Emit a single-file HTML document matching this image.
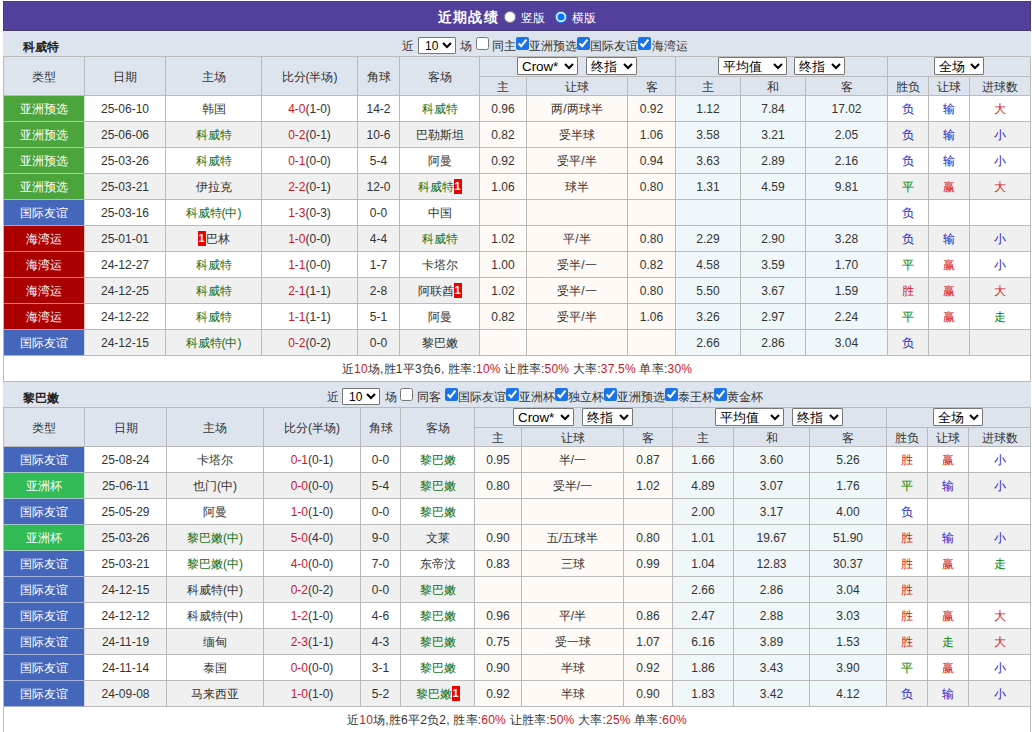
<!DOCTYPE html><html><head><meta charset="utf-8"><style>
*{margin:0;padding:0}
html,body{width:1032px;height:732px;overflow:hidden;background:#fff}
body{position:relative;font-family:"Liberation Sans",sans-serif;font-size:12px;color:#333}
.a{position:absolute}
.t{position:absolute;text-align:center;white-space:nowrap}
.rc{display:inline-block;background:#e00;color:#fff;font-weight:bold;width:8px;height:15px;line-height:15px;font-size:11px;text-align:center;vertical-align:middle;position:relative;top:-1px}
.sel{position:absolute;height:18px;font-family:"Liberation Sans",sans-serif;font-size:13.33px;color:#000;background:#fff;border:1px solid #767676;border-radius:1px;padding:0}
.s10{position:absolute;height:17px;width:38px;font-family:"Liberation Sans",sans-serif;font-size:12px;border:1px solid #767676;border-radius:1px;background:#fff;color:#000;padding:0 0 0 2px}
.cb{position:absolute;width:13px;height:13px;margin:0;accent-color:#1a73e8}
.rd{position:absolute;width:12px;height:12px;margin:0}
</style></head><body><div class="a" style="left:3px;top:1px;width:1028px;height:30px;background:#52409c;box-sizing:border-box;border:1px solid #423b74"></div>
<div class="a" style="left:3px;top:31px;width:1028px;height:1px;background:#e4e4fa;"></div>
<div class="t" style="left:438px;top:2px;height:30px;line-height:30px;text-align:left;color:#fff"><b style="font-size:14px;letter-spacing:1.2px">近期战绩</b></div>
<input type="radio" name="v" class="rd" style="left:504px;top:11px">
<div class="t" style="left:521px;top:3px;height:30px;line-height:30px;text-align:left;color:#fff">竖版</div>
<input type="radio" name="v" class="rd" style="left:555px;top:11px" checked>
<div class="t" style="left:572px;top:3px;height:30px;line-height:30px;text-align:left;color:#fff">横版</div>
<div class="a" style="left:3px;top:32px;width:1028px;height:24px;background:#dde4ee;"></div>
<div class="t" style="left:23px;top:32px;height:24px;line-height:24px;text-align:left;color:#222;padding-top:9px;line-height:12px;height:auto"><b>科威特</b></div>
<div class="t" style="left:402px;top:32px;height:24px;line-height:24px;text-align:left;padding-top:8px;line-height:12px;height:auto">近</div>
<select class="s10" style="left:418px;top:37px"><option>10</option></select>
<div class="t" style="left:460px;top:32px;height:24px;line-height:24px;text-align:left;padding-top:8px;line-height:12px;height:auto">场</div>
<input type="checkbox" class="cb" style="left:476px;top:37px">
<div class="t" style="left:492px;top:32px;height:24px;line-height:24px;text-align:left;padding-top:8px;line-height:12px;height:auto">同主</div>
<input type="checkbox" class="cb" style="left:516px;top:37px" checked>
<div class="t" style="left:529px;top:32px;height:24px;line-height:24px;text-align:left;padding-top:8px;line-height:12px;height:auto">亚洲预选</div>
<input type="checkbox" class="cb" style="left:577px;top:37px" checked>
<div class="t" style="left:590px;top:32px;height:24px;line-height:24px;text-align:left;padding-top:8px;line-height:12px;height:auto">国际友谊</div>
<input type="checkbox" class="cb" style="left:638px;top:37px" checked>
<div class="t" style="left:652px;top:32px;height:24px;line-height:24px;text-align:left;padding-top:8px;line-height:12px;height:auto">海湾运</div>
<div class="a" style="left:3px;top:56px;width:1028px;height:39px;background:#dde4ee;"></div>
<div class="a" style="left:3px;top:56px;width:1028px;height:1px;background:#bababa;"></div>
<div class="a" style="left:479px;top:76px;width:552px;height:1px;background:#bababa;"></div>
<div class="a" style="left:3px;top:95px;width:1028px;height:1px;background:#bababa;"></div>
<div class="a" style="left:3px;top:56px;width:1px;height:40px;background:#bababa;"></div>
<div class="a" style="left:84px;top:56px;width:1px;height:40px;background:#bababa;"></div>
<div class="a" style="left:165px;top:56px;width:1px;height:40px;background:#bababa;"></div>
<div class="a" style="left:261px;top:56px;width:1px;height:40px;background:#bababa;"></div>
<div class="a" style="left:357px;top:56px;width:1px;height:40px;background:#bababa;"></div>
<div class="a" style="left:399px;top:56px;width:1px;height:40px;background:#bababa;"></div>
<div class="a" style="left:479px;top:56px;width:1px;height:40px;background:#bababa;"></div>
<div class="a" style="left:526px;top:76px;width:1px;height:20px;background:#bababa;"></div>
<div class="a" style="left:627px;top:76px;width:1px;height:20px;background:#bababa;"></div>
<div class="a" style="left:675px;top:56px;width:1px;height:40px;background:#bababa;"></div>
<div class="a" style="left:740px;top:76px;width:1px;height:20px;background:#bababa;"></div>
<div class="a" style="left:805px;top:76px;width:1px;height:20px;background:#bababa;"></div>
<div class="a" style="left:887px;top:56px;width:1px;height:40px;background:#bababa;"></div>
<div class="a" style="left:928px;top:76px;width:1px;height:20px;background:#bababa;"></div>
<div class="a" style="left:969px;top:76px;width:1px;height:20px;background:#bababa;"></div>
<div class="a" style="left:1030px;top:56px;width:1px;height:40px;background:#bababa;"></div>
<div class="t" style="left:4px;top:58px;width:80px;height:38px;line-height:38px;color:#333">类型</div>
<div class="t" style="left:85px;top:58px;width:80px;height:38px;line-height:38px;color:#333">日期</div>
<div class="t" style="left:166px;top:58px;width:95px;height:38px;line-height:38px;color:#333">主场</div>
<div class="t" style="left:262px;top:58px;width:95px;height:38px;line-height:38px;color:#333">比分(半场)</div>
<div class="t" style="left:358px;top:58px;width:41px;height:38px;line-height:38px;color:#333">角球</div>
<div class="t" style="left:400px;top:58px;width:79px;height:38px;line-height:38px;color:#333">客场</div>
<div class="t" style="left:480px;top:78px;width:46px;height:18px;line-height:18px;color:#333">主</div>
<div class="t" style="left:527px;top:78px;width:100px;height:18px;line-height:18px;color:#333">让球</div>
<div class="t" style="left:628px;top:78px;width:47px;height:18px;line-height:18px;color:#333">客</div>
<div class="t" style="left:676px;top:78px;width:64px;height:18px;line-height:18px;color:#333">主</div>
<div class="t" style="left:741px;top:78px;width:64px;height:18px;line-height:18px;color:#333">和</div>
<div class="t" style="left:806px;top:78px;width:81px;height:18px;line-height:18px;color:#333">客</div>
<div class="t" style="left:888px;top:78px;width:40px;height:18px;line-height:18px;color:#333">胜负</div>
<div class="t" style="left:929px;top:78px;width:40px;height:18px;line-height:18px;color:#333">让球</div>
<div class="t" style="left:970px;top:78px;width:60px;height:18px;line-height:18px;color:#333">进球数</div>
<select class="sel" style="left:517px;top:57px;width:61px"><option>Crow*</option></select>
<select class="sel" style="left:586px;top:57px;width:51px"><option>终指</option></select>
<select class="sel" style="left:718px;top:57px;width:69px"><option>平均值</option></select>
<select class="sel" style="left:794px;top:57px;width:51px"><option>终指</option></select>
<select class="sel" style="left:934px;top:57px;width:50px"><option>全场</option></select>
<div class="a" style="left:3px;top:96px;width:1028px;height:25px;background:#fff;"></div>
<div class="a" style="left:480px;top:96px;width:195px;height:25px;background:#fffaf6;"></div>
<div class="a" style="left:676px;top:96px;width:211px;height:25px;background:#f0f7fb;"></div>
<div class="a" style="left:4px;top:96px;width:80px;height:25px;background:#4ca53c;"></div>
<div class="a" style="left:3px;top:121px;width:1028px;height:1px;background:#bababa;"></div>
<div class="a" style="left:3px;top:96px;width:1px;height:26px;background:#bababa;"></div>
<div class="a" style="left:84px;top:96px;width:1px;height:26px;background:#bababa;"></div>
<div class="a" style="left:165px;top:96px;width:1px;height:26px;background:#bababa;"></div>
<div class="a" style="left:261px;top:96px;width:1px;height:26px;background:#bababa;"></div>
<div class="a" style="left:357px;top:96px;width:1px;height:26px;background:#bababa;"></div>
<div class="a" style="left:399px;top:96px;width:1px;height:26px;background:#bababa;"></div>
<div class="a" style="left:479px;top:96px;width:1px;height:26px;background:#bababa;"></div>
<div class="a" style="left:526px;top:96px;width:1px;height:26px;background:#bababa;"></div>
<div class="a" style="left:627px;top:96px;width:1px;height:26px;background:#bababa;"></div>
<div class="a" style="left:675px;top:96px;width:1px;height:26px;background:#bababa;"></div>
<div class="a" style="left:740px;top:96px;width:1px;height:26px;background:#bababa;"></div>
<div class="a" style="left:805px;top:96px;width:1px;height:26px;background:#bababa;"></div>
<div class="a" style="left:887px;top:96px;width:1px;height:26px;background:#bababa;"></div>
<div class="a" style="left:928px;top:96px;width:1px;height:26px;background:#bababa;"></div>
<div class="a" style="left:969px;top:96px;width:1px;height:26px;background:#bababa;"></div>
<div class="a" style="left:1030px;top:96px;width:1px;height:26px;background:#bababa;"></div>
<div class="a" style="left:4px;top:96px;width:81px;height:25px;background:#4ca53c;"></div>
<div class="a" style="left:4px;top:121px;width:80px;height:1px;background:#a6d29e;"></div>
<div class="a" style="left:84px;top:96px;width:1px;height:25px;background:#d2e8ce;"></div>
<div class="t" style="left:4px;top:97px;width:80px;height:25px;line-height:25px;color:#fff">亚洲预选</div>
<div class="t" style="left:85px;top:97px;width:80px;height:25px;line-height:25px;">25-06-10</div>
<div class="t" style="left:166px;top:97px;width:95px;height:25px;line-height:25px;"><span style="color:#333">韩国</span></div>
<div class="t" style="left:262px;top:97px;width:95px;height:25px;line-height:25px;"><span style="color:#c8182a">4-0</span>(1-0)</div>
<div class="t" style="left:358px;top:97px;width:41px;height:25px;line-height:25px;">14-2</div>
<div class="t" style="left:400px;top:97px;width:79px;height:25px;line-height:25px;"><span style="color:#167016">科威特</span></div>
<div class="t" style="left:480px;top:97px;width:46px;height:25px;line-height:25px;">0.96</div>
<div class="t" style="left:527px;top:97px;width:100px;height:25px;line-height:25px;">两/两球半</div>
<div class="t" style="left:628px;top:97px;width:47px;height:25px;line-height:25px;">0.92</div>
<div class="t" style="left:676px;top:97px;width:64px;height:25px;line-height:25px;">1.12</div>
<div class="t" style="left:741px;top:97px;width:64px;height:25px;line-height:25px;">7.84</div>
<div class="t" style="left:806px;top:97px;width:81px;height:25px;line-height:25px;">17.02</div>
<div class="t" style="left:888px;top:97px;width:40px;height:25px;line-height:25px;color:#1e1ec4">负</div>
<div class="t" style="left:929px;top:97px;width:40px;height:25px;line-height:25px;color:#1e1ec4">输</div>
<div class="t" style="left:970px;top:97px;width:60px;height:25px;line-height:25px;color:#d41818">大</div>
<div class="a" style="left:3px;top:122px;width:1028px;height:25px;background:#f0f0f0;"></div>
<div class="a" style="left:480px;top:122px;width:195px;height:25px;background:#fffaf6;"></div>
<div class="a" style="left:676px;top:122px;width:211px;height:25px;background:#f0f7fb;"></div>
<div class="a" style="left:4px;top:122px;width:80px;height:25px;background:#4ca53c;"></div>
<div class="a" style="left:3px;top:147px;width:1028px;height:1px;background:#bababa;"></div>
<div class="a" style="left:3px;top:122px;width:1px;height:26px;background:#bababa;"></div>
<div class="a" style="left:84px;top:122px;width:1px;height:26px;background:#bababa;"></div>
<div class="a" style="left:165px;top:122px;width:1px;height:26px;background:#bababa;"></div>
<div class="a" style="left:261px;top:122px;width:1px;height:26px;background:#bababa;"></div>
<div class="a" style="left:357px;top:122px;width:1px;height:26px;background:#bababa;"></div>
<div class="a" style="left:399px;top:122px;width:1px;height:26px;background:#bababa;"></div>
<div class="a" style="left:479px;top:122px;width:1px;height:26px;background:#bababa;"></div>
<div class="a" style="left:526px;top:122px;width:1px;height:26px;background:#bababa;"></div>
<div class="a" style="left:627px;top:122px;width:1px;height:26px;background:#bababa;"></div>
<div class="a" style="left:675px;top:122px;width:1px;height:26px;background:#bababa;"></div>
<div class="a" style="left:740px;top:122px;width:1px;height:26px;background:#bababa;"></div>
<div class="a" style="left:805px;top:122px;width:1px;height:26px;background:#bababa;"></div>
<div class="a" style="left:887px;top:122px;width:1px;height:26px;background:#bababa;"></div>
<div class="a" style="left:928px;top:122px;width:1px;height:26px;background:#bababa;"></div>
<div class="a" style="left:969px;top:122px;width:1px;height:26px;background:#bababa;"></div>
<div class="a" style="left:1030px;top:122px;width:1px;height:26px;background:#bababa;"></div>
<div class="a" style="left:4px;top:122px;width:81px;height:25px;background:#4ca53c;"></div>
<div class="a" style="left:4px;top:147px;width:80px;height:1px;background:#a6d29e;"></div>
<div class="a" style="left:84px;top:122px;width:1px;height:25px;background:#cee5ca;"></div>
<div class="t" style="left:4px;top:123px;width:80px;height:25px;line-height:25px;color:#fff">亚洲预选</div>
<div class="t" style="left:85px;top:123px;width:80px;height:25px;line-height:25px;">25-06-06</div>
<div class="t" style="left:166px;top:123px;width:95px;height:25px;line-height:25px;"><span style="color:#167016">科威特</span></div>
<div class="t" style="left:262px;top:123px;width:95px;height:25px;line-height:25px;"><span style="color:#c8182a">0-2</span>(0-1)</div>
<div class="t" style="left:358px;top:123px;width:41px;height:25px;line-height:25px;">10-6</div>
<div class="t" style="left:400px;top:123px;width:79px;height:25px;line-height:25px;"><span style="color:#333">巴勒斯坦</span></div>
<div class="t" style="left:480px;top:123px;width:46px;height:25px;line-height:25px;">0.82</div>
<div class="t" style="left:527px;top:123px;width:100px;height:25px;line-height:25px;">受半球</div>
<div class="t" style="left:628px;top:123px;width:47px;height:25px;line-height:25px;">1.06</div>
<div class="t" style="left:676px;top:123px;width:64px;height:25px;line-height:25px;">3.58</div>
<div class="t" style="left:741px;top:123px;width:64px;height:25px;line-height:25px;">3.21</div>
<div class="t" style="left:806px;top:123px;width:81px;height:25px;line-height:25px;">2.05</div>
<div class="t" style="left:888px;top:123px;width:40px;height:25px;line-height:25px;color:#1e1ec4">负</div>
<div class="t" style="left:929px;top:123px;width:40px;height:25px;line-height:25px;color:#1e1ec4">输</div>
<div class="t" style="left:970px;top:123px;width:60px;height:25px;line-height:25px;color:#1e1ec4">小</div>
<div class="a" style="left:3px;top:148px;width:1028px;height:25px;background:#fff;"></div>
<div class="a" style="left:480px;top:148px;width:195px;height:25px;background:#fffaf6;"></div>
<div class="a" style="left:676px;top:148px;width:211px;height:25px;background:#f0f7fb;"></div>
<div class="a" style="left:4px;top:148px;width:80px;height:25px;background:#4ca53c;"></div>
<div class="a" style="left:3px;top:173px;width:1028px;height:1px;background:#bababa;"></div>
<div class="a" style="left:3px;top:148px;width:1px;height:26px;background:#bababa;"></div>
<div class="a" style="left:84px;top:148px;width:1px;height:26px;background:#bababa;"></div>
<div class="a" style="left:165px;top:148px;width:1px;height:26px;background:#bababa;"></div>
<div class="a" style="left:261px;top:148px;width:1px;height:26px;background:#bababa;"></div>
<div class="a" style="left:357px;top:148px;width:1px;height:26px;background:#bababa;"></div>
<div class="a" style="left:399px;top:148px;width:1px;height:26px;background:#bababa;"></div>
<div class="a" style="left:479px;top:148px;width:1px;height:26px;background:#bababa;"></div>
<div class="a" style="left:526px;top:148px;width:1px;height:26px;background:#bababa;"></div>
<div class="a" style="left:627px;top:148px;width:1px;height:26px;background:#bababa;"></div>
<div class="a" style="left:675px;top:148px;width:1px;height:26px;background:#bababa;"></div>
<div class="a" style="left:740px;top:148px;width:1px;height:26px;background:#bababa;"></div>
<div class="a" style="left:805px;top:148px;width:1px;height:26px;background:#bababa;"></div>
<div class="a" style="left:887px;top:148px;width:1px;height:26px;background:#bababa;"></div>
<div class="a" style="left:928px;top:148px;width:1px;height:26px;background:#bababa;"></div>
<div class="a" style="left:969px;top:148px;width:1px;height:26px;background:#bababa;"></div>
<div class="a" style="left:1030px;top:148px;width:1px;height:26px;background:#bababa;"></div>
<div class="a" style="left:4px;top:148px;width:81px;height:25px;background:#4ca53c;"></div>
<div class="a" style="left:4px;top:173px;width:80px;height:1px;background:#a6d29e;"></div>
<div class="a" style="left:84px;top:148px;width:1px;height:25px;background:#d2e8ce;"></div>
<div class="t" style="left:4px;top:149px;width:80px;height:25px;line-height:25px;color:#fff">亚洲预选</div>
<div class="t" style="left:85px;top:149px;width:80px;height:25px;line-height:25px;">25-03-26</div>
<div class="t" style="left:166px;top:149px;width:95px;height:25px;line-height:25px;"><span style="color:#167016">科威特</span></div>
<div class="t" style="left:262px;top:149px;width:95px;height:25px;line-height:25px;"><span style="color:#c8182a">0-1</span>(0-0)</div>
<div class="t" style="left:358px;top:149px;width:41px;height:25px;line-height:25px;">5-4</div>
<div class="t" style="left:400px;top:149px;width:79px;height:25px;line-height:25px;"><span style="color:#333">阿曼</span></div>
<div class="t" style="left:480px;top:149px;width:46px;height:25px;line-height:25px;">0.92</div>
<div class="t" style="left:527px;top:149px;width:100px;height:25px;line-height:25px;">受平/半</div>
<div class="t" style="left:628px;top:149px;width:47px;height:25px;line-height:25px;">0.94</div>
<div class="t" style="left:676px;top:149px;width:64px;height:25px;line-height:25px;">3.63</div>
<div class="t" style="left:741px;top:149px;width:64px;height:25px;line-height:25px;">2.89</div>
<div class="t" style="left:806px;top:149px;width:81px;height:25px;line-height:25px;">2.16</div>
<div class="t" style="left:888px;top:149px;width:40px;height:25px;line-height:25px;color:#1e1ec4">负</div>
<div class="t" style="left:929px;top:149px;width:40px;height:25px;line-height:25px;color:#1e1ec4">输</div>
<div class="t" style="left:970px;top:149px;width:60px;height:25px;line-height:25px;color:#1e1ec4">小</div>
<div class="a" style="left:3px;top:174px;width:1028px;height:25px;background:#f0f0f0;"></div>
<div class="a" style="left:480px;top:174px;width:195px;height:25px;background:#fffaf6;"></div>
<div class="a" style="left:676px;top:174px;width:211px;height:25px;background:#f0f7fb;"></div>
<div class="a" style="left:4px;top:174px;width:80px;height:25px;background:#4ca53c;"></div>
<div class="a" style="left:3px;top:199px;width:1028px;height:1px;background:#bababa;"></div>
<div class="a" style="left:3px;top:174px;width:1px;height:26px;background:#bababa;"></div>
<div class="a" style="left:84px;top:174px;width:1px;height:26px;background:#bababa;"></div>
<div class="a" style="left:165px;top:174px;width:1px;height:26px;background:#bababa;"></div>
<div class="a" style="left:261px;top:174px;width:1px;height:26px;background:#bababa;"></div>
<div class="a" style="left:357px;top:174px;width:1px;height:26px;background:#bababa;"></div>
<div class="a" style="left:399px;top:174px;width:1px;height:26px;background:#bababa;"></div>
<div class="a" style="left:479px;top:174px;width:1px;height:26px;background:#bababa;"></div>
<div class="a" style="left:526px;top:174px;width:1px;height:26px;background:#bababa;"></div>
<div class="a" style="left:627px;top:174px;width:1px;height:26px;background:#bababa;"></div>
<div class="a" style="left:675px;top:174px;width:1px;height:26px;background:#bababa;"></div>
<div class="a" style="left:740px;top:174px;width:1px;height:26px;background:#bababa;"></div>
<div class="a" style="left:805px;top:174px;width:1px;height:26px;background:#bababa;"></div>
<div class="a" style="left:887px;top:174px;width:1px;height:26px;background:#bababa;"></div>
<div class="a" style="left:928px;top:174px;width:1px;height:26px;background:#bababa;"></div>
<div class="a" style="left:969px;top:174px;width:1px;height:26px;background:#bababa;"></div>
<div class="a" style="left:1030px;top:174px;width:1px;height:26px;background:#bababa;"></div>
<div class="a" style="left:4px;top:174px;width:81px;height:25px;background:#4ca53c;"></div>
<div class="a" style="left:4px;top:199px;width:80px;height:1px;background:#a4c2bd;"></div>
<div class="a" style="left:84px;top:174px;width:1px;height:25px;background:#cee5ca;"></div>
<div class="t" style="left:4px;top:175px;width:80px;height:25px;line-height:25px;color:#fff">亚洲预选</div>
<div class="t" style="left:85px;top:175px;width:80px;height:25px;line-height:25px;">25-03-21</div>
<div class="t" style="left:166px;top:175px;width:95px;height:25px;line-height:25px;"><span style="color:#333">伊拉克</span></div>
<div class="t" style="left:262px;top:175px;width:95px;height:25px;line-height:25px;"><span style="color:#c8182a">2-2</span>(0-1)</div>
<div class="t" style="left:358px;top:175px;width:41px;height:25px;line-height:25px;">12-0</div>
<div class="t" style="left:400px;top:175px;width:79px;height:25px;line-height:25px;"><span style="color:#167016">科威特</span><span class="rc">1</span></div>
<div class="t" style="left:480px;top:175px;width:46px;height:25px;line-height:25px;">1.06</div>
<div class="t" style="left:527px;top:175px;width:100px;height:25px;line-height:25px;">球半</div>
<div class="t" style="left:628px;top:175px;width:47px;height:25px;line-height:25px;">0.80</div>
<div class="t" style="left:676px;top:175px;width:64px;height:25px;line-height:25px;">1.31</div>
<div class="t" style="left:741px;top:175px;width:64px;height:25px;line-height:25px;">4.59</div>
<div class="t" style="left:806px;top:175px;width:81px;height:25px;line-height:25px;">9.81</div>
<div class="t" style="left:888px;top:175px;width:40px;height:25px;line-height:25px;color:#008000">平</div>
<div class="t" style="left:929px;top:175px;width:40px;height:25px;line-height:25px;color:#d41818">赢</div>
<div class="t" style="left:970px;top:175px;width:60px;height:25px;line-height:25px;color:#d41818">大</div>
<div class="a" style="left:3px;top:200px;width:1028px;height:25px;background:#fff;"></div>
<div class="a" style="left:480px;top:200px;width:195px;height:25px;background:#fffaf6;"></div>
<div class="a" style="left:676px;top:200px;width:211px;height:25px;background:#f0f7fb;"></div>
<div class="a" style="left:4px;top:200px;width:80px;height:25px;background:#4466bb;"></div>
<div class="a" style="left:3px;top:225px;width:1028px;height:1px;background:#bababa;"></div>
<div class="a" style="left:3px;top:200px;width:1px;height:26px;background:#bababa;"></div>
<div class="a" style="left:84px;top:200px;width:1px;height:26px;background:#bababa;"></div>
<div class="a" style="left:165px;top:200px;width:1px;height:26px;background:#bababa;"></div>
<div class="a" style="left:261px;top:200px;width:1px;height:26px;background:#bababa;"></div>
<div class="a" style="left:357px;top:200px;width:1px;height:26px;background:#bababa;"></div>
<div class="a" style="left:399px;top:200px;width:1px;height:26px;background:#bababa;"></div>
<div class="a" style="left:479px;top:200px;width:1px;height:26px;background:#bababa;"></div>
<div class="a" style="left:526px;top:200px;width:1px;height:26px;background:#bababa;"></div>
<div class="a" style="left:627px;top:200px;width:1px;height:26px;background:#bababa;"></div>
<div class="a" style="left:675px;top:200px;width:1px;height:26px;background:#bababa;"></div>
<div class="a" style="left:740px;top:200px;width:1px;height:26px;background:#bababa;"></div>
<div class="a" style="left:805px;top:200px;width:1px;height:26px;background:#bababa;"></div>
<div class="a" style="left:887px;top:200px;width:1px;height:26px;background:#bababa;"></div>
<div class="a" style="left:928px;top:200px;width:1px;height:26px;background:#bababa;"></div>
<div class="a" style="left:969px;top:200px;width:1px;height:26px;background:#bababa;"></div>
<div class="a" style="left:1030px;top:200px;width:1px;height:26px;background:#bababa;"></div>
<div class="a" style="left:4px;top:200px;width:81px;height:25px;background:#4466bb;"></div>
<div class="a" style="left:4px;top:225px;width:80px;height:1px;background:#bb99ae;"></div>
<div class="a" style="left:84px;top:200px;width:1px;height:25px;background:#d0d9ee;"></div>
<div class="t" style="left:4px;top:201px;width:80px;height:25px;line-height:25px;color:#fff">国际友谊</div>
<div class="t" style="left:85px;top:201px;width:80px;height:25px;line-height:25px;">25-03-16</div>
<div class="t" style="left:166px;top:201px;width:95px;height:25px;line-height:25px;"><span style="color:#167016">科威特(中)</span></div>
<div class="t" style="left:262px;top:201px;width:95px;height:25px;line-height:25px;"><span style="color:#c8182a">1-3</span>(0-3)</div>
<div class="t" style="left:358px;top:201px;width:41px;height:25px;line-height:25px;">0-0</div>
<div class="t" style="left:400px;top:201px;width:79px;height:25px;line-height:25px;"><span style="color:#333">中国</span></div>
<div class="t" style="left:480px;top:201px;width:46px;height:25px;line-height:25px;"></div>
<div class="t" style="left:527px;top:201px;width:100px;height:25px;line-height:25px;"></div>
<div class="t" style="left:628px;top:201px;width:47px;height:25px;line-height:25px;"></div>
<div class="t" style="left:676px;top:201px;width:64px;height:25px;line-height:25px;"></div>
<div class="t" style="left:741px;top:201px;width:64px;height:25px;line-height:25px;"></div>
<div class="t" style="left:806px;top:201px;width:81px;height:25px;line-height:25px;"></div>
<div class="t" style="left:888px;top:201px;width:40px;height:25px;line-height:25px;color:#1e1ec4">负</div>
<div class="t" style="left:929px;top:201px;width:40px;height:25px;line-height:25px;color:#333"></div>
<div class="t" style="left:970px;top:201px;width:60px;height:25px;line-height:25px;color:#333"></div>
<div class="a" style="left:3px;top:226px;width:1028px;height:25px;background:#f0f0f0;"></div>
<div class="a" style="left:480px;top:226px;width:195px;height:25px;background:#fffaf6;"></div>
<div class="a" style="left:676px;top:226px;width:211px;height:25px;background:#f0f7fb;"></div>
<div class="a" style="left:4px;top:226px;width:80px;height:25px;background:#aa0000;"></div>
<div class="a" style="left:3px;top:251px;width:1028px;height:1px;background:#bababa;"></div>
<div class="a" style="left:3px;top:226px;width:1px;height:26px;background:#bababa;"></div>
<div class="a" style="left:84px;top:226px;width:1px;height:26px;background:#bababa;"></div>
<div class="a" style="left:165px;top:226px;width:1px;height:26px;background:#bababa;"></div>
<div class="a" style="left:261px;top:226px;width:1px;height:26px;background:#bababa;"></div>
<div class="a" style="left:357px;top:226px;width:1px;height:26px;background:#bababa;"></div>
<div class="a" style="left:399px;top:226px;width:1px;height:26px;background:#bababa;"></div>
<div class="a" style="left:479px;top:226px;width:1px;height:26px;background:#bababa;"></div>
<div class="a" style="left:526px;top:226px;width:1px;height:26px;background:#bababa;"></div>
<div class="a" style="left:627px;top:226px;width:1px;height:26px;background:#bababa;"></div>
<div class="a" style="left:675px;top:226px;width:1px;height:26px;background:#bababa;"></div>
<div class="a" style="left:740px;top:226px;width:1px;height:26px;background:#bababa;"></div>
<div class="a" style="left:805px;top:226px;width:1px;height:26px;background:#bababa;"></div>
<div class="a" style="left:887px;top:226px;width:1px;height:26px;background:#bababa;"></div>
<div class="a" style="left:928px;top:226px;width:1px;height:26px;background:#bababa;"></div>
<div class="a" style="left:969px;top:226px;width:1px;height:26px;background:#bababa;"></div>
<div class="a" style="left:1030px;top:226px;width:1px;height:26px;background:#bababa;"></div>
<div class="a" style="left:4px;top:226px;width:81px;height:25px;background:#aa0000;"></div>
<div class="a" style="left:4px;top:251px;width:80px;height:1px;background:#d48080;"></div>
<div class="a" style="left:84px;top:226px;width:1px;height:25px;background:#e6bcbc;"></div>
<div class="t" style="left:4px;top:227px;width:80px;height:25px;line-height:25px;color:#fff">海湾运</div>
<div class="t" style="left:85px;top:227px;width:80px;height:25px;line-height:25px;">25-01-01</div>
<div class="t" style="left:166px;top:227px;width:95px;height:25px;line-height:25px;"><span class="rc">1</span><span style="color:#333">巴林</span></div>
<div class="t" style="left:262px;top:227px;width:95px;height:25px;line-height:25px;"><span style="color:#c8182a">1-0</span>(0-0)</div>
<div class="t" style="left:358px;top:227px;width:41px;height:25px;line-height:25px;">4-4</div>
<div class="t" style="left:400px;top:227px;width:79px;height:25px;line-height:25px;"><span style="color:#167016">科威特</span></div>
<div class="t" style="left:480px;top:227px;width:46px;height:25px;line-height:25px;">1.02</div>
<div class="t" style="left:527px;top:227px;width:100px;height:25px;line-height:25px;">平/半</div>
<div class="t" style="left:628px;top:227px;width:47px;height:25px;line-height:25px;">0.80</div>
<div class="t" style="left:676px;top:227px;width:64px;height:25px;line-height:25px;">2.29</div>
<div class="t" style="left:741px;top:227px;width:64px;height:25px;line-height:25px;">2.90</div>
<div class="t" style="left:806px;top:227px;width:81px;height:25px;line-height:25px;">3.28</div>
<div class="t" style="left:888px;top:227px;width:40px;height:25px;line-height:25px;color:#1e1ec4">负</div>
<div class="t" style="left:929px;top:227px;width:40px;height:25px;line-height:25px;color:#1e1ec4">输</div>
<div class="t" style="left:970px;top:227px;width:60px;height:25px;line-height:25px;color:#1e1ec4">小</div>
<div class="a" style="left:3px;top:252px;width:1028px;height:25px;background:#fff;"></div>
<div class="a" style="left:480px;top:252px;width:195px;height:25px;background:#fffaf6;"></div>
<div class="a" style="left:676px;top:252px;width:211px;height:25px;background:#f0f7fb;"></div>
<div class="a" style="left:4px;top:252px;width:80px;height:25px;background:#aa0000;"></div>
<div class="a" style="left:3px;top:277px;width:1028px;height:1px;background:#bababa;"></div>
<div class="a" style="left:3px;top:252px;width:1px;height:26px;background:#bababa;"></div>
<div class="a" style="left:84px;top:252px;width:1px;height:26px;background:#bababa;"></div>
<div class="a" style="left:165px;top:252px;width:1px;height:26px;background:#bababa;"></div>
<div class="a" style="left:261px;top:252px;width:1px;height:26px;background:#bababa;"></div>
<div class="a" style="left:357px;top:252px;width:1px;height:26px;background:#bababa;"></div>
<div class="a" style="left:399px;top:252px;width:1px;height:26px;background:#bababa;"></div>
<div class="a" style="left:479px;top:252px;width:1px;height:26px;background:#bababa;"></div>
<div class="a" style="left:526px;top:252px;width:1px;height:26px;background:#bababa;"></div>
<div class="a" style="left:627px;top:252px;width:1px;height:26px;background:#bababa;"></div>
<div class="a" style="left:675px;top:252px;width:1px;height:26px;background:#bababa;"></div>
<div class="a" style="left:740px;top:252px;width:1px;height:26px;background:#bababa;"></div>
<div class="a" style="left:805px;top:252px;width:1px;height:26px;background:#bababa;"></div>
<div class="a" style="left:887px;top:252px;width:1px;height:26px;background:#bababa;"></div>
<div class="a" style="left:928px;top:252px;width:1px;height:26px;background:#bababa;"></div>
<div class="a" style="left:969px;top:252px;width:1px;height:26px;background:#bababa;"></div>
<div class="a" style="left:1030px;top:252px;width:1px;height:26px;background:#bababa;"></div>
<div class="a" style="left:4px;top:252px;width:81px;height:25px;background:#aa0000;"></div>
<div class="a" style="left:4px;top:277px;width:80px;height:1px;background:#d48080;"></div>
<div class="a" style="left:84px;top:252px;width:1px;height:25px;background:#eabfbf;"></div>
<div class="t" style="left:4px;top:253px;width:80px;height:25px;line-height:25px;color:#fff">海湾运</div>
<div class="t" style="left:85px;top:253px;width:80px;height:25px;line-height:25px;">24-12-27</div>
<div class="t" style="left:166px;top:253px;width:95px;height:25px;line-height:25px;"><span style="color:#167016">科威特</span></div>
<div class="t" style="left:262px;top:253px;width:95px;height:25px;line-height:25px;"><span style="color:#c8182a">1-1</span>(0-0)</div>
<div class="t" style="left:358px;top:253px;width:41px;height:25px;line-height:25px;">1-7</div>
<div class="t" style="left:400px;top:253px;width:79px;height:25px;line-height:25px;"><span style="color:#333">卡塔尔</span></div>
<div class="t" style="left:480px;top:253px;width:46px;height:25px;line-height:25px;">1.00</div>
<div class="t" style="left:527px;top:253px;width:100px;height:25px;line-height:25px;">受半/一</div>
<div class="t" style="left:628px;top:253px;width:47px;height:25px;line-height:25px;">0.82</div>
<div class="t" style="left:676px;top:253px;width:64px;height:25px;line-height:25px;">4.58</div>
<div class="t" style="left:741px;top:253px;width:64px;height:25px;line-height:25px;">3.59</div>
<div class="t" style="left:806px;top:253px;width:81px;height:25px;line-height:25px;">1.70</div>
<div class="t" style="left:888px;top:253px;width:40px;height:25px;line-height:25px;color:#008000">平</div>
<div class="t" style="left:929px;top:253px;width:40px;height:25px;line-height:25px;color:#d41818">赢</div>
<div class="t" style="left:970px;top:253px;width:60px;height:25px;line-height:25px;color:#1e1ec4">小</div>
<div class="a" style="left:3px;top:278px;width:1028px;height:25px;background:#f0f0f0;"></div>
<div class="a" style="left:480px;top:278px;width:195px;height:25px;background:#fffaf6;"></div>
<div class="a" style="left:676px;top:278px;width:211px;height:25px;background:#f0f7fb;"></div>
<div class="a" style="left:4px;top:278px;width:80px;height:25px;background:#aa0000;"></div>
<div class="a" style="left:3px;top:303px;width:1028px;height:1px;background:#bababa;"></div>
<div class="a" style="left:3px;top:278px;width:1px;height:26px;background:#bababa;"></div>
<div class="a" style="left:84px;top:278px;width:1px;height:26px;background:#bababa;"></div>
<div class="a" style="left:165px;top:278px;width:1px;height:26px;background:#bababa;"></div>
<div class="a" style="left:261px;top:278px;width:1px;height:26px;background:#bababa;"></div>
<div class="a" style="left:357px;top:278px;width:1px;height:26px;background:#bababa;"></div>
<div class="a" style="left:399px;top:278px;width:1px;height:26px;background:#bababa;"></div>
<div class="a" style="left:479px;top:278px;width:1px;height:26px;background:#bababa;"></div>
<div class="a" style="left:526px;top:278px;width:1px;height:26px;background:#bababa;"></div>
<div class="a" style="left:627px;top:278px;width:1px;height:26px;background:#bababa;"></div>
<div class="a" style="left:675px;top:278px;width:1px;height:26px;background:#bababa;"></div>
<div class="a" style="left:740px;top:278px;width:1px;height:26px;background:#bababa;"></div>
<div class="a" style="left:805px;top:278px;width:1px;height:26px;background:#bababa;"></div>
<div class="a" style="left:887px;top:278px;width:1px;height:26px;background:#bababa;"></div>
<div class="a" style="left:928px;top:278px;width:1px;height:26px;background:#bababa;"></div>
<div class="a" style="left:969px;top:278px;width:1px;height:26px;background:#bababa;"></div>
<div class="a" style="left:1030px;top:278px;width:1px;height:26px;background:#bababa;"></div>
<div class="a" style="left:4px;top:278px;width:81px;height:25px;background:#aa0000;"></div>
<div class="a" style="left:4px;top:303px;width:80px;height:1px;background:#d48080;"></div>
<div class="a" style="left:84px;top:278px;width:1px;height:25px;background:#e6bcbc;"></div>
<div class="t" style="left:4px;top:279px;width:80px;height:25px;line-height:25px;color:#fff">海湾运</div>
<div class="t" style="left:85px;top:279px;width:80px;height:25px;line-height:25px;">24-12-25</div>
<div class="t" style="left:166px;top:279px;width:95px;height:25px;line-height:25px;"><span style="color:#167016">科威特</span></div>
<div class="t" style="left:262px;top:279px;width:95px;height:25px;line-height:25px;"><span style="color:#c8182a">2-1</span>(1-1)</div>
<div class="t" style="left:358px;top:279px;width:41px;height:25px;line-height:25px;">2-8</div>
<div class="t" style="left:400px;top:279px;width:79px;height:25px;line-height:25px;"><span style="color:#333">阿联酋</span><span class="rc">1</span></div>
<div class="t" style="left:480px;top:279px;width:46px;height:25px;line-height:25px;">1.02</div>
<div class="t" style="left:527px;top:279px;width:100px;height:25px;line-height:25px;">受半/一</div>
<div class="t" style="left:628px;top:279px;width:47px;height:25px;line-height:25px;">0.80</div>
<div class="t" style="left:676px;top:279px;width:64px;height:25px;line-height:25px;">5.50</div>
<div class="t" style="left:741px;top:279px;width:64px;height:25px;line-height:25px;">3.67</div>
<div class="t" style="left:806px;top:279px;width:81px;height:25px;line-height:25px;">1.59</div>
<div class="t" style="left:888px;top:279px;width:40px;height:25px;line-height:25px;color:#d41818">胜</div>
<div class="t" style="left:929px;top:279px;width:40px;height:25px;line-height:25px;color:#d41818">赢</div>
<div class="t" style="left:970px;top:279px;width:60px;height:25px;line-height:25px;color:#d41818">大</div>
<div class="a" style="left:3px;top:304px;width:1028px;height:25px;background:#fff;"></div>
<div class="a" style="left:480px;top:304px;width:195px;height:25px;background:#fffaf6;"></div>
<div class="a" style="left:676px;top:304px;width:211px;height:25px;background:#f0f7fb;"></div>
<div class="a" style="left:4px;top:304px;width:80px;height:25px;background:#aa0000;"></div>
<div class="a" style="left:3px;top:329px;width:1028px;height:1px;background:#bababa;"></div>
<div class="a" style="left:3px;top:304px;width:1px;height:26px;background:#bababa;"></div>
<div class="a" style="left:84px;top:304px;width:1px;height:26px;background:#bababa;"></div>
<div class="a" style="left:165px;top:304px;width:1px;height:26px;background:#bababa;"></div>
<div class="a" style="left:261px;top:304px;width:1px;height:26px;background:#bababa;"></div>
<div class="a" style="left:357px;top:304px;width:1px;height:26px;background:#bababa;"></div>
<div class="a" style="left:399px;top:304px;width:1px;height:26px;background:#bababa;"></div>
<div class="a" style="left:479px;top:304px;width:1px;height:26px;background:#bababa;"></div>
<div class="a" style="left:526px;top:304px;width:1px;height:26px;background:#bababa;"></div>
<div class="a" style="left:627px;top:304px;width:1px;height:26px;background:#bababa;"></div>
<div class="a" style="left:675px;top:304px;width:1px;height:26px;background:#bababa;"></div>
<div class="a" style="left:740px;top:304px;width:1px;height:26px;background:#bababa;"></div>
<div class="a" style="left:805px;top:304px;width:1px;height:26px;background:#bababa;"></div>
<div class="a" style="left:887px;top:304px;width:1px;height:26px;background:#bababa;"></div>
<div class="a" style="left:928px;top:304px;width:1px;height:26px;background:#bababa;"></div>
<div class="a" style="left:969px;top:304px;width:1px;height:26px;background:#bababa;"></div>
<div class="a" style="left:1030px;top:304px;width:1px;height:26px;background:#bababa;"></div>
<div class="a" style="left:4px;top:304px;width:81px;height:25px;background:#aa0000;"></div>
<div class="a" style="left:4px;top:329px;width:80px;height:1px;background:#bb99ae;"></div>
<div class="a" style="left:84px;top:304px;width:1px;height:25px;background:#eabfbf;"></div>
<div class="t" style="left:4px;top:305px;width:80px;height:25px;line-height:25px;color:#fff">海湾运</div>
<div class="t" style="left:85px;top:305px;width:80px;height:25px;line-height:25px;">24-12-22</div>
<div class="t" style="left:166px;top:305px;width:95px;height:25px;line-height:25px;"><span style="color:#167016">科威特</span></div>
<div class="t" style="left:262px;top:305px;width:95px;height:25px;line-height:25px;"><span style="color:#c8182a">1-1</span>(1-1)</div>
<div class="t" style="left:358px;top:305px;width:41px;height:25px;line-height:25px;">5-1</div>
<div class="t" style="left:400px;top:305px;width:79px;height:25px;line-height:25px;"><span style="color:#333">阿曼</span></div>
<div class="t" style="left:480px;top:305px;width:46px;height:25px;line-height:25px;">0.82</div>
<div class="t" style="left:527px;top:305px;width:100px;height:25px;line-height:25px;">受平/半</div>
<div class="t" style="left:628px;top:305px;width:47px;height:25px;line-height:25px;">1.06</div>
<div class="t" style="left:676px;top:305px;width:64px;height:25px;line-height:25px;">3.26</div>
<div class="t" style="left:741px;top:305px;width:64px;height:25px;line-height:25px;">2.97</div>
<div class="t" style="left:806px;top:305px;width:81px;height:25px;line-height:25px;">2.24</div>
<div class="t" style="left:888px;top:305px;width:40px;height:25px;line-height:25px;color:#008000">平</div>
<div class="t" style="left:929px;top:305px;width:40px;height:25px;line-height:25px;color:#d41818">赢</div>
<div class="t" style="left:970px;top:305px;width:60px;height:25px;line-height:25px;color:#008000">走</div>
<div class="a" style="left:3px;top:330px;width:1028px;height:25px;background:#f0f0f0;"></div>
<div class="a" style="left:480px;top:330px;width:195px;height:25px;background:#fffaf6;"></div>
<div class="a" style="left:676px;top:330px;width:211px;height:25px;background:#f0f7fb;"></div>
<div class="a" style="left:4px;top:330px;width:80px;height:25px;background:#4466bb;"></div>
<div class="a" style="left:3px;top:355px;width:1028px;height:1px;background:#bababa;"></div>
<div class="a" style="left:3px;top:330px;width:1px;height:26px;background:#bababa;"></div>
<div class="a" style="left:84px;top:330px;width:1px;height:26px;background:#bababa;"></div>
<div class="a" style="left:165px;top:330px;width:1px;height:26px;background:#bababa;"></div>
<div class="a" style="left:261px;top:330px;width:1px;height:26px;background:#bababa;"></div>
<div class="a" style="left:357px;top:330px;width:1px;height:26px;background:#bababa;"></div>
<div class="a" style="left:399px;top:330px;width:1px;height:26px;background:#bababa;"></div>
<div class="a" style="left:479px;top:330px;width:1px;height:26px;background:#bababa;"></div>
<div class="a" style="left:526px;top:330px;width:1px;height:26px;background:#bababa;"></div>
<div class="a" style="left:627px;top:330px;width:1px;height:26px;background:#bababa;"></div>
<div class="a" style="left:675px;top:330px;width:1px;height:26px;background:#bababa;"></div>
<div class="a" style="left:740px;top:330px;width:1px;height:26px;background:#bababa;"></div>
<div class="a" style="left:805px;top:330px;width:1px;height:26px;background:#bababa;"></div>
<div class="a" style="left:887px;top:330px;width:1px;height:26px;background:#bababa;"></div>
<div class="a" style="left:928px;top:330px;width:1px;height:26px;background:#bababa;"></div>
<div class="a" style="left:969px;top:330px;width:1px;height:26px;background:#bababa;"></div>
<div class="a" style="left:1030px;top:330px;width:1px;height:26px;background:#bababa;"></div>
<div class="a" style="left:4px;top:330px;width:81px;height:25px;background:#4466bb;"></div>
<div class="a" style="left:4px;top:355px;width:80px;height:1px;background:#a2b2dd;"></div>
<div class="a" style="left:84px;top:330px;width:1px;height:25px;background:#ccd5ea;"></div>
<div class="t" style="left:4px;top:331px;width:80px;height:25px;line-height:25px;color:#fff">国际友谊</div>
<div class="t" style="left:85px;top:331px;width:80px;height:25px;line-height:25px;">24-12-15</div>
<div class="t" style="left:166px;top:331px;width:95px;height:25px;line-height:25px;"><span style="color:#167016">科威特(中)</span></div>
<div class="t" style="left:262px;top:331px;width:95px;height:25px;line-height:25px;"><span style="color:#c8182a">0-2</span>(0-2)</div>
<div class="t" style="left:358px;top:331px;width:41px;height:25px;line-height:25px;">0-0</div>
<div class="t" style="left:400px;top:331px;width:79px;height:25px;line-height:25px;"><span style="color:#333">黎巴嫩</span></div>
<div class="t" style="left:480px;top:331px;width:46px;height:25px;line-height:25px;"></div>
<div class="t" style="left:527px;top:331px;width:100px;height:25px;line-height:25px;"></div>
<div class="t" style="left:628px;top:331px;width:47px;height:25px;line-height:25px;"></div>
<div class="t" style="left:676px;top:331px;width:64px;height:25px;line-height:25px;">2.66</div>
<div class="t" style="left:741px;top:331px;width:64px;height:25px;line-height:25px;">2.86</div>
<div class="t" style="left:806px;top:331px;width:81px;height:25px;line-height:25px;">3.04</div>
<div class="t" style="left:888px;top:331px;width:40px;height:25px;line-height:25px;color:#1e1ec4">负</div>
<div class="t" style="left:929px;top:331px;width:40px;height:25px;line-height:25px;color:#333"></div>
<div class="t" style="left:970px;top:331px;width:60px;height:25px;line-height:25px;color:#333"></div>
<div class="a" style="left:3px;top:356px;width:1028px;height:25px;background:#fff;"></div>
<div class="a" style="left:3px;top:356px;width:1px;height:26px;background:#bababa;"></div>
<div class="a" style="left:1030px;top:356px;width:1px;height:26px;background:#bababa;"></div>
<div class="a" style="left:3px;top:381px;width:1028px;height:1px;background:#bababa;"></div>
<div class="t" style="left:4px;top:357px;width:1026px;height:25px;line-height:25px;letter-spacing:0.22px">近<span style="color:#c8182a">10</span>场,胜1平3负6, 胜率:<span style="color:#c8182a">10%</span> 让胜率:<span style="color:#c8182a">50%</span> 大率:<span style="color:#c8182a">37.5%</span> 单率:<span style="color:#c8182a">30%</span></div>
<div class="a" style="left:3px;top:382px;width:1028px;height:25px;background:#dde4ee;"></div>
<div class="t" style="left:23px;top:382px;height:25px;line-height:25px;text-align:left;color:#222;padding-top:10px;line-height:12px;height:auto"><b>黎巴嫩</b></div>
<div class="t" style="left:327px;top:382px;height:25px;line-height:25px;text-align:left;padding-top:9px;line-height:12px;height:auto">近</div>
<select class="s10" style="left:342px;top:388px"><option>10</option></select>
<div class="t" style="left:385px;top:382px;height:25px;line-height:25px;text-align:left;padding-top:9px;line-height:12px;height:auto">场</div>
<input type="checkbox" class="cb" style="left:400px;top:388px">
<div class="t" style="left:417px;top:382px;height:25px;line-height:25px;text-align:left;padding-top:9px;line-height:12px;height:auto">同客</div>
<input type="checkbox" class="cb" style="left:445px;top:388px" checked>
<div class="t" style="left:458px;top:382px;height:25px;line-height:25px;text-align:left;padding-top:9px;line-height:12px;height:auto">国际友谊</div>
<input type="checkbox" class="cb" style="left:506px;top:388px" checked>
<div class="t" style="left:519px;top:382px;height:25px;line-height:25px;text-align:left;padding-top:9px;line-height:12px;height:auto">亚洲杯</div>
<input type="checkbox" class="cb" style="left:555px;top:388px" checked>
<div class="t" style="left:568px;top:382px;height:25px;line-height:25px;text-align:left;padding-top:9px;line-height:12px;height:auto">独立杯</div>
<input type="checkbox" class="cb" style="left:604px;top:388px" checked>
<div class="t" style="left:617px;top:382px;height:25px;line-height:25px;text-align:left;padding-top:9px;line-height:12px;height:auto">亚洲预选</div>
<input type="checkbox" class="cb" style="left:665px;top:388px" checked>
<div class="t" style="left:678px;top:382px;height:25px;line-height:25px;text-align:left;padding-top:9px;line-height:12px;height:auto">泰王杯</div>
<input type="checkbox" class="cb" style="left:714px;top:388px" checked>
<div class="t" style="left:727px;top:382px;height:25px;line-height:25px;text-align:left;padding-top:9px;line-height:12px;height:auto">黄金杯</div>
<div class="a" style="left:3px;top:407px;width:1028px;height:39px;background:#dde4ee;"></div>
<div class="a" style="left:3px;top:407px;width:1028px;height:1px;background:#bababa;"></div>
<div class="a" style="left:474px;top:427px;width:557px;height:1px;background:#bababa;"></div>
<div class="a" style="left:3px;top:446px;width:1028px;height:1px;background:#bababa;"></div>
<div class="a" style="left:3px;top:407px;width:1px;height:40px;background:#bababa;"></div>
<div class="a" style="left:84px;top:407px;width:1px;height:40px;background:#bababa;"></div>
<div class="a" style="left:166px;top:407px;width:1px;height:40px;background:#bababa;"></div>
<div class="a" style="left:263px;top:407px;width:1px;height:40px;background:#bababa;"></div>
<div class="a" style="left:360px;top:407px;width:1px;height:40px;background:#bababa;"></div>
<div class="a" style="left:400px;top:407px;width:1px;height:40px;background:#bababa;"></div>
<div class="a" style="left:474px;top:407px;width:1px;height:40px;background:#bababa;"></div>
<div class="a" style="left:521px;top:427px;width:1px;height:20px;background:#bababa;"></div>
<div class="a" style="left:623px;top:427px;width:1px;height:20px;background:#bababa;"></div>
<div class="a" style="left:672px;top:407px;width:1px;height:40px;background:#bababa;"></div>
<div class="a" style="left:733px;top:427px;width:1px;height:20px;background:#bababa;"></div>
<div class="a" style="left:809px;top:427px;width:1px;height:20px;background:#bababa;"></div>
<div class="a" style="left:886px;top:407px;width:1px;height:40px;background:#bababa;"></div>
<div class="a" style="left:927px;top:427px;width:1px;height:20px;background:#bababa;"></div>
<div class="a" style="left:968px;top:427px;width:1px;height:20px;background:#bababa;"></div>
<div class="a" style="left:1030px;top:407px;width:1px;height:40px;background:#bababa;"></div>
<div class="t" style="left:4px;top:409px;width:80px;height:38px;line-height:38px;color:#333">类型</div>
<div class="t" style="left:85px;top:409px;width:81px;height:38px;line-height:38px;color:#333">日期</div>
<div class="t" style="left:167px;top:409px;width:96px;height:38px;line-height:38px;color:#333">主场</div>
<div class="t" style="left:264px;top:409px;width:96px;height:38px;line-height:38px;color:#333">比分(半场)</div>
<div class="t" style="left:361px;top:409px;width:39px;height:38px;line-height:38px;color:#333">角球</div>
<div class="t" style="left:401px;top:409px;width:73px;height:38px;line-height:38px;color:#333">客场</div>
<div class="t" style="left:475px;top:429px;width:46px;height:18px;line-height:18px;color:#333">主</div>
<div class="t" style="left:522px;top:429px;width:101px;height:18px;line-height:18px;color:#333">让球</div>
<div class="t" style="left:624px;top:429px;width:48px;height:18px;line-height:18px;color:#333">客</div>
<div class="t" style="left:673px;top:429px;width:60px;height:18px;line-height:18px;color:#333">主</div>
<div class="t" style="left:734px;top:429px;width:75px;height:18px;line-height:18px;color:#333">和</div>
<div class="t" style="left:810px;top:429px;width:76px;height:18px;line-height:18px;color:#333">客</div>
<div class="t" style="left:887px;top:429px;width:40px;height:18px;line-height:18px;color:#333">胜负</div>
<div class="t" style="left:928px;top:429px;width:40px;height:18px;line-height:18px;color:#333">让球</div>
<div class="t" style="left:969px;top:429px;width:61px;height:18px;line-height:18px;color:#333">进球数</div>
<select class="sel" style="left:513px;top:408px;width:61px"><option>Crow*</option></select>
<select class="sel" style="left:582px;top:408px;width:51px"><option>终指</option></select>
<select class="sel" style="left:715px;top:408px;width:69px"><option>平均值</option></select>
<select class="sel" style="left:792px;top:408px;width:51px"><option>终指</option></select>
<select class="sel" style="left:933px;top:408px;width:50px"><option>全场</option></select>
<div class="a" style="left:3px;top:447px;width:1028px;height:25px;background:#fff;"></div>
<div class="a" style="left:475px;top:447px;width:197px;height:25px;background:#fffaf6;"></div>
<div class="a" style="left:673px;top:447px;width:213px;height:25px;background:#f0f7fb;"></div>
<div class="a" style="left:4px;top:447px;width:80px;height:25px;background:#4466bb;"></div>
<div class="a" style="left:3px;top:472px;width:1028px;height:1px;background:#bababa;"></div>
<div class="a" style="left:3px;top:447px;width:1px;height:26px;background:#bababa;"></div>
<div class="a" style="left:84px;top:447px;width:1px;height:26px;background:#bababa;"></div>
<div class="a" style="left:166px;top:447px;width:1px;height:26px;background:#bababa;"></div>
<div class="a" style="left:263px;top:447px;width:1px;height:26px;background:#bababa;"></div>
<div class="a" style="left:360px;top:447px;width:1px;height:26px;background:#bababa;"></div>
<div class="a" style="left:400px;top:447px;width:1px;height:26px;background:#bababa;"></div>
<div class="a" style="left:474px;top:447px;width:1px;height:26px;background:#bababa;"></div>
<div class="a" style="left:521px;top:447px;width:1px;height:26px;background:#bababa;"></div>
<div class="a" style="left:623px;top:447px;width:1px;height:26px;background:#bababa;"></div>
<div class="a" style="left:672px;top:447px;width:1px;height:26px;background:#bababa;"></div>
<div class="a" style="left:733px;top:447px;width:1px;height:26px;background:#bababa;"></div>
<div class="a" style="left:809px;top:447px;width:1px;height:26px;background:#bababa;"></div>
<div class="a" style="left:886px;top:447px;width:1px;height:26px;background:#bababa;"></div>
<div class="a" style="left:927px;top:447px;width:1px;height:26px;background:#bababa;"></div>
<div class="a" style="left:968px;top:447px;width:1px;height:26px;background:#bababa;"></div>
<div class="a" style="left:1030px;top:447px;width:1px;height:26px;background:#bababa;"></div>
<div class="a" style="left:4px;top:447px;width:81px;height:25px;background:#4466bb;"></div>
<div class="a" style="left:4px;top:472px;width:80px;height:1px;background:#9dc8c4;"></div>
<div class="a" style="left:84px;top:447px;width:1px;height:25px;background:#d0d9ee;"></div>
<div class="t" style="left:4px;top:448px;width:80px;height:25px;line-height:25px;color:#fff">国际友谊</div>
<div class="t" style="left:85px;top:448px;width:81px;height:25px;line-height:25px;">25-08-24</div>
<div class="t" style="left:167px;top:448px;width:96px;height:25px;line-height:25px;"><span style="color:#333">卡塔尔</span></div>
<div class="t" style="left:264px;top:448px;width:96px;height:25px;line-height:25px;"><span style="color:#c8182a">0-1</span>(0-1)</div>
<div class="t" style="left:361px;top:448px;width:39px;height:25px;line-height:25px;">0-0</div>
<div class="t" style="left:401px;top:448px;width:73px;height:25px;line-height:25px;"><span style="color:#167016">黎巴嫩</span></div>
<div class="t" style="left:475px;top:448px;width:46px;height:25px;line-height:25px;">0.95</div>
<div class="t" style="left:522px;top:448px;width:101px;height:25px;line-height:25px;">半/一</div>
<div class="t" style="left:624px;top:448px;width:48px;height:25px;line-height:25px;">0.87</div>
<div class="t" style="left:673px;top:448px;width:60px;height:25px;line-height:25px;">1.66</div>
<div class="t" style="left:734px;top:448px;width:75px;height:25px;line-height:25px;">3.60</div>
<div class="t" style="left:810px;top:448px;width:76px;height:25px;line-height:25px;">5.26</div>
<div class="t" style="left:887px;top:448px;width:40px;height:25px;line-height:25px;color:#d41818">胜</div>
<div class="t" style="left:928px;top:448px;width:40px;height:25px;line-height:25px;color:#d41818">赢</div>
<div class="t" style="left:969px;top:448px;width:61px;height:25px;line-height:25px;color:#1e1ec4">小</div>
<div class="a" style="left:3px;top:473px;width:1028px;height:25px;background:#f0f0f0;"></div>
<div class="a" style="left:475px;top:473px;width:197px;height:25px;background:#fffaf6;"></div>
<div class="a" style="left:673px;top:473px;width:213px;height:25px;background:#f0f7fb;"></div>
<div class="a" style="left:4px;top:473px;width:80px;height:25px;background:#33bb55;"></div>
<div class="a" style="left:3px;top:498px;width:1028px;height:1px;background:#bababa;"></div>
<div class="a" style="left:3px;top:473px;width:1px;height:26px;background:#bababa;"></div>
<div class="a" style="left:84px;top:473px;width:1px;height:26px;background:#bababa;"></div>
<div class="a" style="left:166px;top:473px;width:1px;height:26px;background:#bababa;"></div>
<div class="a" style="left:263px;top:473px;width:1px;height:26px;background:#bababa;"></div>
<div class="a" style="left:360px;top:473px;width:1px;height:26px;background:#bababa;"></div>
<div class="a" style="left:400px;top:473px;width:1px;height:26px;background:#bababa;"></div>
<div class="a" style="left:474px;top:473px;width:1px;height:26px;background:#bababa;"></div>
<div class="a" style="left:521px;top:473px;width:1px;height:26px;background:#bababa;"></div>
<div class="a" style="left:623px;top:473px;width:1px;height:26px;background:#bababa;"></div>
<div class="a" style="left:672px;top:473px;width:1px;height:26px;background:#bababa;"></div>
<div class="a" style="left:733px;top:473px;width:1px;height:26px;background:#bababa;"></div>
<div class="a" style="left:809px;top:473px;width:1px;height:26px;background:#bababa;"></div>
<div class="a" style="left:886px;top:473px;width:1px;height:26px;background:#bababa;"></div>
<div class="a" style="left:927px;top:473px;width:1px;height:26px;background:#bababa;"></div>
<div class="a" style="left:968px;top:473px;width:1px;height:26px;background:#bababa;"></div>
<div class="a" style="left:1030px;top:473px;width:1px;height:26px;background:#bababa;"></div>
<div class="a" style="left:4px;top:473px;width:81px;height:25px;background:#33bb55;"></div>
<div class="a" style="left:4px;top:498px;width:80px;height:1px;background:#9dc8c4;"></div>
<div class="a" style="left:84px;top:473px;width:1px;height:25px;background:#c8ead1;"></div>
<div class="t" style="left:4px;top:474px;width:80px;height:25px;line-height:25px;color:#fff">亚洲杯</div>
<div class="t" style="left:85px;top:474px;width:81px;height:25px;line-height:25px;">25-06-11</div>
<div class="t" style="left:167px;top:474px;width:96px;height:25px;line-height:25px;"><span style="color:#333">也门(中)</span></div>
<div class="t" style="left:264px;top:474px;width:96px;height:25px;line-height:25px;"><span style="color:#c8182a">0-0</span>(0-0)</div>
<div class="t" style="left:361px;top:474px;width:39px;height:25px;line-height:25px;">5-4</div>
<div class="t" style="left:401px;top:474px;width:73px;height:25px;line-height:25px;"><span style="color:#167016">黎巴嫩</span></div>
<div class="t" style="left:475px;top:474px;width:46px;height:25px;line-height:25px;">0.80</div>
<div class="t" style="left:522px;top:474px;width:101px;height:25px;line-height:25px;">受半/一</div>
<div class="t" style="left:624px;top:474px;width:48px;height:25px;line-height:25px;">1.02</div>
<div class="t" style="left:673px;top:474px;width:60px;height:25px;line-height:25px;">4.89</div>
<div class="t" style="left:734px;top:474px;width:75px;height:25px;line-height:25px;">3.07</div>
<div class="t" style="left:810px;top:474px;width:76px;height:25px;line-height:25px;">1.76</div>
<div class="t" style="left:887px;top:474px;width:40px;height:25px;line-height:25px;color:#008000">平</div>
<div class="t" style="left:928px;top:474px;width:40px;height:25px;line-height:25px;color:#1e1ec4">输</div>
<div class="t" style="left:969px;top:474px;width:61px;height:25px;line-height:25px;color:#1e1ec4">小</div>
<div class="a" style="left:3px;top:499px;width:1028px;height:25px;background:#fff;"></div>
<div class="a" style="left:475px;top:499px;width:197px;height:25px;background:#fffaf6;"></div>
<div class="a" style="left:673px;top:499px;width:213px;height:25px;background:#f0f7fb;"></div>
<div class="a" style="left:4px;top:499px;width:80px;height:25px;background:#4466bb;"></div>
<div class="a" style="left:3px;top:524px;width:1028px;height:1px;background:#bababa;"></div>
<div class="a" style="left:3px;top:499px;width:1px;height:26px;background:#bababa;"></div>
<div class="a" style="left:84px;top:499px;width:1px;height:26px;background:#bababa;"></div>
<div class="a" style="left:166px;top:499px;width:1px;height:26px;background:#bababa;"></div>
<div class="a" style="left:263px;top:499px;width:1px;height:26px;background:#bababa;"></div>
<div class="a" style="left:360px;top:499px;width:1px;height:26px;background:#bababa;"></div>
<div class="a" style="left:400px;top:499px;width:1px;height:26px;background:#bababa;"></div>
<div class="a" style="left:474px;top:499px;width:1px;height:26px;background:#bababa;"></div>
<div class="a" style="left:521px;top:499px;width:1px;height:26px;background:#bababa;"></div>
<div class="a" style="left:623px;top:499px;width:1px;height:26px;background:#bababa;"></div>
<div class="a" style="left:672px;top:499px;width:1px;height:26px;background:#bababa;"></div>
<div class="a" style="left:733px;top:499px;width:1px;height:26px;background:#bababa;"></div>
<div class="a" style="left:809px;top:499px;width:1px;height:26px;background:#bababa;"></div>
<div class="a" style="left:886px;top:499px;width:1px;height:26px;background:#bababa;"></div>
<div class="a" style="left:927px;top:499px;width:1px;height:26px;background:#bababa;"></div>
<div class="a" style="left:968px;top:499px;width:1px;height:26px;background:#bababa;"></div>
<div class="a" style="left:1030px;top:499px;width:1px;height:26px;background:#bababa;"></div>
<div class="a" style="left:4px;top:499px;width:81px;height:25px;background:#4466bb;"></div>
<div class="a" style="left:4px;top:524px;width:80px;height:1px;background:#9dc8c4;"></div>
<div class="a" style="left:84px;top:499px;width:1px;height:25px;background:#d0d9ee;"></div>
<div class="t" style="left:4px;top:500px;width:80px;height:25px;line-height:25px;color:#fff">国际友谊</div>
<div class="t" style="left:85px;top:500px;width:81px;height:25px;line-height:25px;">25-05-29</div>
<div class="t" style="left:167px;top:500px;width:96px;height:25px;line-height:25px;"><span style="color:#333">阿曼</span></div>
<div class="t" style="left:264px;top:500px;width:96px;height:25px;line-height:25px;"><span style="color:#c8182a">1-0</span>(1-0)</div>
<div class="t" style="left:361px;top:500px;width:39px;height:25px;line-height:25px;">0-0</div>
<div class="t" style="left:401px;top:500px;width:73px;height:25px;line-height:25px;"><span style="color:#167016">黎巴嫩</span></div>
<div class="t" style="left:475px;top:500px;width:46px;height:25px;line-height:25px;"></div>
<div class="t" style="left:522px;top:500px;width:101px;height:25px;line-height:25px;"></div>
<div class="t" style="left:624px;top:500px;width:48px;height:25px;line-height:25px;"></div>
<div class="t" style="left:673px;top:500px;width:60px;height:25px;line-height:25px;">2.00</div>
<div class="t" style="left:734px;top:500px;width:75px;height:25px;line-height:25px;">3.17</div>
<div class="t" style="left:810px;top:500px;width:76px;height:25px;line-height:25px;">4.00</div>
<div class="t" style="left:887px;top:500px;width:40px;height:25px;line-height:25px;color:#1e1ec4">负</div>
<div class="t" style="left:928px;top:500px;width:40px;height:25px;line-height:25px;color:#333"></div>
<div class="t" style="left:969px;top:500px;width:61px;height:25px;line-height:25px;color:#333"></div>
<div class="a" style="left:3px;top:525px;width:1028px;height:25px;background:#f0f0f0;"></div>
<div class="a" style="left:475px;top:525px;width:197px;height:25px;background:#fffaf6;"></div>
<div class="a" style="left:673px;top:525px;width:213px;height:25px;background:#f0f7fb;"></div>
<div class="a" style="left:4px;top:525px;width:80px;height:25px;background:#33bb55;"></div>
<div class="a" style="left:3px;top:550px;width:1028px;height:1px;background:#bababa;"></div>
<div class="a" style="left:3px;top:525px;width:1px;height:26px;background:#bababa;"></div>
<div class="a" style="left:84px;top:525px;width:1px;height:26px;background:#bababa;"></div>
<div class="a" style="left:166px;top:525px;width:1px;height:26px;background:#bababa;"></div>
<div class="a" style="left:263px;top:525px;width:1px;height:26px;background:#bababa;"></div>
<div class="a" style="left:360px;top:525px;width:1px;height:26px;background:#bababa;"></div>
<div class="a" style="left:400px;top:525px;width:1px;height:26px;background:#bababa;"></div>
<div class="a" style="left:474px;top:525px;width:1px;height:26px;background:#bababa;"></div>
<div class="a" style="left:521px;top:525px;width:1px;height:26px;background:#bababa;"></div>
<div class="a" style="left:623px;top:525px;width:1px;height:26px;background:#bababa;"></div>
<div class="a" style="left:672px;top:525px;width:1px;height:26px;background:#bababa;"></div>
<div class="a" style="left:733px;top:525px;width:1px;height:26px;background:#bababa;"></div>
<div class="a" style="left:809px;top:525px;width:1px;height:26px;background:#bababa;"></div>
<div class="a" style="left:886px;top:525px;width:1px;height:26px;background:#bababa;"></div>
<div class="a" style="left:927px;top:525px;width:1px;height:26px;background:#bababa;"></div>
<div class="a" style="left:968px;top:525px;width:1px;height:26px;background:#bababa;"></div>
<div class="a" style="left:1030px;top:525px;width:1px;height:26px;background:#bababa;"></div>
<div class="a" style="left:4px;top:525px;width:81px;height:25px;background:#33bb55;"></div>
<div class="a" style="left:4px;top:550px;width:80px;height:1px;background:#9dc8c4;"></div>
<div class="a" style="left:84px;top:525px;width:1px;height:25px;background:#c8ead1;"></div>
<div class="t" style="left:4px;top:526px;width:80px;height:25px;line-height:25px;color:#fff">亚洲杯</div>
<div class="t" style="left:85px;top:526px;width:81px;height:25px;line-height:25px;">25-03-26</div>
<div class="t" style="left:167px;top:526px;width:96px;height:25px;line-height:25px;"><span style="color:#167016">黎巴嫩(中)</span></div>
<div class="t" style="left:264px;top:526px;width:96px;height:25px;line-height:25px;"><span style="color:#c8182a">5-0</span>(4-0)</div>
<div class="t" style="left:361px;top:526px;width:39px;height:25px;line-height:25px;">9-0</div>
<div class="t" style="left:401px;top:526px;width:73px;height:25px;line-height:25px;"><span style="color:#333">文莱</span></div>
<div class="t" style="left:475px;top:526px;width:46px;height:25px;line-height:25px;">0.90</div>
<div class="t" style="left:522px;top:526px;width:101px;height:25px;line-height:25px;">五/五球半</div>
<div class="t" style="left:624px;top:526px;width:48px;height:25px;line-height:25px;">0.80</div>
<div class="t" style="left:673px;top:526px;width:60px;height:25px;line-height:25px;">1.01</div>
<div class="t" style="left:734px;top:526px;width:75px;height:25px;line-height:25px;">19.67</div>
<div class="t" style="left:810px;top:526px;width:76px;height:25px;line-height:25px;">51.90</div>
<div class="t" style="left:887px;top:526px;width:40px;height:25px;line-height:25px;color:#d41818">胜</div>
<div class="t" style="left:928px;top:526px;width:40px;height:25px;line-height:25px;color:#1e1ec4">输</div>
<div class="t" style="left:969px;top:526px;width:61px;height:25px;line-height:25px;color:#1e1ec4">小</div>
<div class="a" style="left:3px;top:551px;width:1028px;height:25px;background:#fff;"></div>
<div class="a" style="left:475px;top:551px;width:197px;height:25px;background:#fffaf6;"></div>
<div class="a" style="left:673px;top:551px;width:213px;height:25px;background:#f0f7fb;"></div>
<div class="a" style="left:4px;top:551px;width:80px;height:25px;background:#4466bb;"></div>
<div class="a" style="left:3px;top:576px;width:1028px;height:1px;background:#bababa;"></div>
<div class="a" style="left:3px;top:551px;width:1px;height:26px;background:#bababa;"></div>
<div class="a" style="left:84px;top:551px;width:1px;height:26px;background:#bababa;"></div>
<div class="a" style="left:166px;top:551px;width:1px;height:26px;background:#bababa;"></div>
<div class="a" style="left:263px;top:551px;width:1px;height:26px;background:#bababa;"></div>
<div class="a" style="left:360px;top:551px;width:1px;height:26px;background:#bababa;"></div>
<div class="a" style="left:400px;top:551px;width:1px;height:26px;background:#bababa;"></div>
<div class="a" style="left:474px;top:551px;width:1px;height:26px;background:#bababa;"></div>
<div class="a" style="left:521px;top:551px;width:1px;height:26px;background:#bababa;"></div>
<div class="a" style="left:623px;top:551px;width:1px;height:26px;background:#bababa;"></div>
<div class="a" style="left:672px;top:551px;width:1px;height:26px;background:#bababa;"></div>
<div class="a" style="left:733px;top:551px;width:1px;height:26px;background:#bababa;"></div>
<div class="a" style="left:809px;top:551px;width:1px;height:26px;background:#bababa;"></div>
<div class="a" style="left:886px;top:551px;width:1px;height:26px;background:#bababa;"></div>
<div class="a" style="left:927px;top:551px;width:1px;height:26px;background:#bababa;"></div>
<div class="a" style="left:968px;top:551px;width:1px;height:26px;background:#bababa;"></div>
<div class="a" style="left:1030px;top:551px;width:1px;height:26px;background:#bababa;"></div>
<div class="a" style="left:4px;top:551px;width:81px;height:25px;background:#4466bb;"></div>
<div class="a" style="left:4px;top:576px;width:80px;height:1px;background:#a2b2dd;"></div>
<div class="a" style="left:84px;top:551px;width:1px;height:25px;background:#d0d9ee;"></div>
<div class="t" style="left:4px;top:552px;width:80px;height:25px;line-height:25px;color:#fff">国际友谊</div>
<div class="t" style="left:85px;top:552px;width:81px;height:25px;line-height:25px;">25-03-21</div>
<div class="t" style="left:167px;top:552px;width:96px;height:25px;line-height:25px;"><span style="color:#167016">黎巴嫩(中)</span></div>
<div class="t" style="left:264px;top:552px;width:96px;height:25px;line-height:25px;"><span style="color:#c8182a">4-0</span>(0-0)</div>
<div class="t" style="left:361px;top:552px;width:39px;height:25px;line-height:25px;">7-0</div>
<div class="t" style="left:401px;top:552px;width:73px;height:25px;line-height:25px;"><span style="color:#333">东帝汶</span></div>
<div class="t" style="left:475px;top:552px;width:46px;height:25px;line-height:25px;">0.83</div>
<div class="t" style="left:522px;top:552px;width:101px;height:25px;line-height:25px;">三球</div>
<div class="t" style="left:624px;top:552px;width:48px;height:25px;line-height:25px;">0.99</div>
<div class="t" style="left:673px;top:552px;width:60px;height:25px;line-height:25px;">1.04</div>
<div class="t" style="left:734px;top:552px;width:75px;height:25px;line-height:25px;">12.83</div>
<div class="t" style="left:810px;top:552px;width:76px;height:25px;line-height:25px;">30.37</div>
<div class="t" style="left:887px;top:552px;width:40px;height:25px;line-height:25px;color:#d41818">胜</div>
<div class="t" style="left:928px;top:552px;width:40px;height:25px;line-height:25px;color:#d41818">赢</div>
<div class="t" style="left:969px;top:552px;width:61px;height:25px;line-height:25px;color:#008000">走</div>
<div class="a" style="left:3px;top:577px;width:1028px;height:25px;background:#f0f0f0;"></div>
<div class="a" style="left:475px;top:577px;width:197px;height:25px;background:#fffaf6;"></div>
<div class="a" style="left:673px;top:577px;width:213px;height:25px;background:#f0f7fb;"></div>
<div class="a" style="left:4px;top:577px;width:80px;height:25px;background:#4466bb;"></div>
<div class="a" style="left:3px;top:602px;width:1028px;height:1px;background:#bababa;"></div>
<div class="a" style="left:3px;top:577px;width:1px;height:26px;background:#bababa;"></div>
<div class="a" style="left:84px;top:577px;width:1px;height:26px;background:#bababa;"></div>
<div class="a" style="left:166px;top:577px;width:1px;height:26px;background:#bababa;"></div>
<div class="a" style="left:263px;top:577px;width:1px;height:26px;background:#bababa;"></div>
<div class="a" style="left:360px;top:577px;width:1px;height:26px;background:#bababa;"></div>
<div class="a" style="left:400px;top:577px;width:1px;height:26px;background:#bababa;"></div>
<div class="a" style="left:474px;top:577px;width:1px;height:26px;background:#bababa;"></div>
<div class="a" style="left:521px;top:577px;width:1px;height:26px;background:#bababa;"></div>
<div class="a" style="left:623px;top:577px;width:1px;height:26px;background:#bababa;"></div>
<div class="a" style="left:672px;top:577px;width:1px;height:26px;background:#bababa;"></div>
<div class="a" style="left:733px;top:577px;width:1px;height:26px;background:#bababa;"></div>
<div class="a" style="left:809px;top:577px;width:1px;height:26px;background:#bababa;"></div>
<div class="a" style="left:886px;top:577px;width:1px;height:26px;background:#bababa;"></div>
<div class="a" style="left:927px;top:577px;width:1px;height:26px;background:#bababa;"></div>
<div class="a" style="left:968px;top:577px;width:1px;height:26px;background:#bababa;"></div>
<div class="a" style="left:1030px;top:577px;width:1px;height:26px;background:#bababa;"></div>
<div class="a" style="left:4px;top:577px;width:81px;height:25px;background:#4466bb;"></div>
<div class="a" style="left:4px;top:602px;width:80px;height:1px;background:#a2b2dd;"></div>
<div class="a" style="left:84px;top:577px;width:1px;height:25px;background:#ccd5ea;"></div>
<div class="t" style="left:4px;top:578px;width:80px;height:25px;line-height:25px;color:#fff">国际友谊</div>
<div class="t" style="left:85px;top:578px;width:81px;height:25px;line-height:25px;">24-12-15</div>
<div class="t" style="left:167px;top:578px;width:96px;height:25px;line-height:25px;"><span style="color:#333">科威特(中)</span></div>
<div class="t" style="left:264px;top:578px;width:96px;height:25px;line-height:25px;"><span style="color:#c8182a">0-2</span>(0-2)</div>
<div class="t" style="left:361px;top:578px;width:39px;height:25px;line-height:25px;">0-0</div>
<div class="t" style="left:401px;top:578px;width:73px;height:25px;line-height:25px;"><span style="color:#167016">黎巴嫩</span></div>
<div class="t" style="left:475px;top:578px;width:46px;height:25px;line-height:25px;"></div>
<div class="t" style="left:522px;top:578px;width:101px;height:25px;line-height:25px;"></div>
<div class="t" style="left:624px;top:578px;width:48px;height:25px;line-height:25px;"></div>
<div class="t" style="left:673px;top:578px;width:60px;height:25px;line-height:25px;">2.66</div>
<div class="t" style="left:734px;top:578px;width:75px;height:25px;line-height:25px;">2.86</div>
<div class="t" style="left:810px;top:578px;width:76px;height:25px;line-height:25px;">3.04</div>
<div class="t" style="left:887px;top:578px;width:40px;height:25px;line-height:25px;color:#d41818">胜</div>
<div class="t" style="left:928px;top:578px;width:40px;height:25px;line-height:25px;color:#333"></div>
<div class="t" style="left:969px;top:578px;width:61px;height:25px;line-height:25px;color:#333"></div>
<div class="a" style="left:3px;top:603px;width:1028px;height:25px;background:#fff;"></div>
<div class="a" style="left:475px;top:603px;width:197px;height:25px;background:#fffaf6;"></div>
<div class="a" style="left:673px;top:603px;width:213px;height:25px;background:#f0f7fb;"></div>
<div class="a" style="left:4px;top:603px;width:80px;height:25px;background:#4466bb;"></div>
<div class="a" style="left:3px;top:628px;width:1028px;height:1px;background:#bababa;"></div>
<div class="a" style="left:3px;top:603px;width:1px;height:26px;background:#bababa;"></div>
<div class="a" style="left:84px;top:603px;width:1px;height:26px;background:#bababa;"></div>
<div class="a" style="left:166px;top:603px;width:1px;height:26px;background:#bababa;"></div>
<div class="a" style="left:263px;top:603px;width:1px;height:26px;background:#bababa;"></div>
<div class="a" style="left:360px;top:603px;width:1px;height:26px;background:#bababa;"></div>
<div class="a" style="left:400px;top:603px;width:1px;height:26px;background:#bababa;"></div>
<div class="a" style="left:474px;top:603px;width:1px;height:26px;background:#bababa;"></div>
<div class="a" style="left:521px;top:603px;width:1px;height:26px;background:#bababa;"></div>
<div class="a" style="left:623px;top:603px;width:1px;height:26px;background:#bababa;"></div>
<div class="a" style="left:672px;top:603px;width:1px;height:26px;background:#bababa;"></div>
<div class="a" style="left:733px;top:603px;width:1px;height:26px;background:#bababa;"></div>
<div class="a" style="left:809px;top:603px;width:1px;height:26px;background:#bababa;"></div>
<div class="a" style="left:886px;top:603px;width:1px;height:26px;background:#bababa;"></div>
<div class="a" style="left:927px;top:603px;width:1px;height:26px;background:#bababa;"></div>
<div class="a" style="left:968px;top:603px;width:1px;height:26px;background:#bababa;"></div>
<div class="a" style="left:1030px;top:603px;width:1px;height:26px;background:#bababa;"></div>
<div class="a" style="left:4px;top:603px;width:81px;height:25px;background:#4466bb;"></div>
<div class="a" style="left:4px;top:628px;width:80px;height:1px;background:#a2b2dd;"></div>
<div class="a" style="left:84px;top:603px;width:1px;height:25px;background:#d0d9ee;"></div>
<div class="t" style="left:4px;top:604px;width:80px;height:25px;line-height:25px;color:#fff">国际友谊</div>
<div class="t" style="left:85px;top:604px;width:81px;height:25px;line-height:25px;">24-12-12</div>
<div class="t" style="left:167px;top:604px;width:96px;height:25px;line-height:25px;"><span style="color:#333">科威特(中)</span></div>
<div class="t" style="left:264px;top:604px;width:96px;height:25px;line-height:25px;"><span style="color:#c8182a">1-2</span>(1-0)</div>
<div class="t" style="left:361px;top:604px;width:39px;height:25px;line-height:25px;">4-6</div>
<div class="t" style="left:401px;top:604px;width:73px;height:25px;line-height:25px;"><span style="color:#167016">黎巴嫩</span></div>
<div class="t" style="left:475px;top:604px;width:46px;height:25px;line-height:25px;">0.96</div>
<div class="t" style="left:522px;top:604px;width:101px;height:25px;line-height:25px;">平/半</div>
<div class="t" style="left:624px;top:604px;width:48px;height:25px;line-height:25px;">0.86</div>
<div class="t" style="left:673px;top:604px;width:60px;height:25px;line-height:25px;">2.47</div>
<div class="t" style="left:734px;top:604px;width:75px;height:25px;line-height:25px;">2.88</div>
<div class="t" style="left:810px;top:604px;width:76px;height:25px;line-height:25px;">3.03</div>
<div class="t" style="left:887px;top:604px;width:40px;height:25px;line-height:25px;color:#d41818">胜</div>
<div class="t" style="left:928px;top:604px;width:40px;height:25px;line-height:25px;color:#d41818">赢</div>
<div class="t" style="left:969px;top:604px;width:61px;height:25px;line-height:25px;color:#d41818">大</div>
<div class="a" style="left:3px;top:629px;width:1028px;height:25px;background:#f0f0f0;"></div>
<div class="a" style="left:475px;top:629px;width:197px;height:25px;background:#fffaf6;"></div>
<div class="a" style="left:673px;top:629px;width:213px;height:25px;background:#f0f7fb;"></div>
<div class="a" style="left:4px;top:629px;width:80px;height:25px;background:#4466bb;"></div>
<div class="a" style="left:3px;top:654px;width:1028px;height:1px;background:#bababa;"></div>
<div class="a" style="left:3px;top:629px;width:1px;height:26px;background:#bababa;"></div>
<div class="a" style="left:84px;top:629px;width:1px;height:26px;background:#bababa;"></div>
<div class="a" style="left:166px;top:629px;width:1px;height:26px;background:#bababa;"></div>
<div class="a" style="left:263px;top:629px;width:1px;height:26px;background:#bababa;"></div>
<div class="a" style="left:360px;top:629px;width:1px;height:26px;background:#bababa;"></div>
<div class="a" style="left:400px;top:629px;width:1px;height:26px;background:#bababa;"></div>
<div class="a" style="left:474px;top:629px;width:1px;height:26px;background:#bababa;"></div>
<div class="a" style="left:521px;top:629px;width:1px;height:26px;background:#bababa;"></div>
<div class="a" style="left:623px;top:629px;width:1px;height:26px;background:#bababa;"></div>
<div class="a" style="left:672px;top:629px;width:1px;height:26px;background:#bababa;"></div>
<div class="a" style="left:733px;top:629px;width:1px;height:26px;background:#bababa;"></div>
<div class="a" style="left:809px;top:629px;width:1px;height:26px;background:#bababa;"></div>
<div class="a" style="left:886px;top:629px;width:1px;height:26px;background:#bababa;"></div>
<div class="a" style="left:927px;top:629px;width:1px;height:26px;background:#bababa;"></div>
<div class="a" style="left:968px;top:629px;width:1px;height:26px;background:#bababa;"></div>
<div class="a" style="left:1030px;top:629px;width:1px;height:26px;background:#bababa;"></div>
<div class="a" style="left:4px;top:629px;width:81px;height:25px;background:#4466bb;"></div>
<div class="a" style="left:4px;top:654px;width:80px;height:1px;background:#a2b2dd;"></div>
<div class="a" style="left:84px;top:629px;width:1px;height:25px;background:#ccd5ea;"></div>
<div class="t" style="left:4px;top:630px;width:80px;height:25px;line-height:25px;color:#fff">国际友谊</div>
<div class="t" style="left:85px;top:630px;width:81px;height:25px;line-height:25px;">24-11-19</div>
<div class="t" style="left:167px;top:630px;width:96px;height:25px;line-height:25px;"><span style="color:#333">缅甸</span></div>
<div class="t" style="left:264px;top:630px;width:96px;height:25px;line-height:25px;"><span style="color:#c8182a">2-3</span>(1-1)</div>
<div class="t" style="left:361px;top:630px;width:39px;height:25px;line-height:25px;">4-3</div>
<div class="t" style="left:401px;top:630px;width:73px;height:25px;line-height:25px;"><span style="color:#167016">黎巴嫩</span></div>
<div class="t" style="left:475px;top:630px;width:46px;height:25px;line-height:25px;">0.75</div>
<div class="t" style="left:522px;top:630px;width:101px;height:25px;line-height:25px;">受一球</div>
<div class="t" style="left:624px;top:630px;width:48px;height:25px;line-height:25px;">1.07</div>
<div class="t" style="left:673px;top:630px;width:60px;height:25px;line-height:25px;">6.16</div>
<div class="t" style="left:734px;top:630px;width:75px;height:25px;line-height:25px;">3.89</div>
<div class="t" style="left:810px;top:630px;width:76px;height:25px;line-height:25px;">1.53</div>
<div class="t" style="left:887px;top:630px;width:40px;height:25px;line-height:25px;color:#d41818">胜</div>
<div class="t" style="left:928px;top:630px;width:40px;height:25px;line-height:25px;color:#008000">走</div>
<div class="t" style="left:969px;top:630px;width:61px;height:25px;line-height:25px;color:#d41818">大</div>
<div class="a" style="left:3px;top:655px;width:1028px;height:25px;background:#fff;"></div>
<div class="a" style="left:475px;top:655px;width:197px;height:25px;background:#fffaf6;"></div>
<div class="a" style="left:673px;top:655px;width:213px;height:25px;background:#f0f7fb;"></div>
<div class="a" style="left:4px;top:655px;width:80px;height:25px;background:#4466bb;"></div>
<div class="a" style="left:3px;top:680px;width:1028px;height:1px;background:#bababa;"></div>
<div class="a" style="left:3px;top:655px;width:1px;height:26px;background:#bababa;"></div>
<div class="a" style="left:84px;top:655px;width:1px;height:26px;background:#bababa;"></div>
<div class="a" style="left:166px;top:655px;width:1px;height:26px;background:#bababa;"></div>
<div class="a" style="left:263px;top:655px;width:1px;height:26px;background:#bababa;"></div>
<div class="a" style="left:360px;top:655px;width:1px;height:26px;background:#bababa;"></div>
<div class="a" style="left:400px;top:655px;width:1px;height:26px;background:#bababa;"></div>
<div class="a" style="left:474px;top:655px;width:1px;height:26px;background:#bababa;"></div>
<div class="a" style="left:521px;top:655px;width:1px;height:26px;background:#bababa;"></div>
<div class="a" style="left:623px;top:655px;width:1px;height:26px;background:#bababa;"></div>
<div class="a" style="left:672px;top:655px;width:1px;height:26px;background:#bababa;"></div>
<div class="a" style="left:733px;top:655px;width:1px;height:26px;background:#bababa;"></div>
<div class="a" style="left:809px;top:655px;width:1px;height:26px;background:#bababa;"></div>
<div class="a" style="left:886px;top:655px;width:1px;height:26px;background:#bababa;"></div>
<div class="a" style="left:927px;top:655px;width:1px;height:26px;background:#bababa;"></div>
<div class="a" style="left:968px;top:655px;width:1px;height:26px;background:#bababa;"></div>
<div class="a" style="left:1030px;top:655px;width:1px;height:26px;background:#bababa;"></div>
<div class="a" style="left:4px;top:655px;width:81px;height:25px;background:#4466bb;"></div>
<div class="a" style="left:4px;top:680px;width:80px;height:1px;background:#a2b2dd;"></div>
<div class="a" style="left:84px;top:655px;width:1px;height:25px;background:#d0d9ee;"></div>
<div class="t" style="left:4px;top:656px;width:80px;height:25px;line-height:25px;color:#fff">国际友谊</div>
<div class="t" style="left:85px;top:656px;width:81px;height:25px;line-height:25px;">24-11-14</div>
<div class="t" style="left:167px;top:656px;width:96px;height:25px;line-height:25px;"><span style="color:#333">泰国</span></div>
<div class="t" style="left:264px;top:656px;width:96px;height:25px;line-height:25px;"><span style="color:#c8182a">0-0</span>(0-0)</div>
<div class="t" style="left:361px;top:656px;width:39px;height:25px;line-height:25px;">3-1</div>
<div class="t" style="left:401px;top:656px;width:73px;height:25px;line-height:25px;"><span style="color:#167016">黎巴嫩</span></div>
<div class="t" style="left:475px;top:656px;width:46px;height:25px;line-height:25px;">0.90</div>
<div class="t" style="left:522px;top:656px;width:101px;height:25px;line-height:25px;">半球</div>
<div class="t" style="left:624px;top:656px;width:48px;height:25px;line-height:25px;">0.92</div>
<div class="t" style="left:673px;top:656px;width:60px;height:25px;line-height:25px;">1.86</div>
<div class="t" style="left:734px;top:656px;width:75px;height:25px;line-height:25px;">3.43</div>
<div class="t" style="left:810px;top:656px;width:76px;height:25px;line-height:25px;">3.90</div>
<div class="t" style="left:887px;top:656px;width:40px;height:25px;line-height:25px;color:#008000">平</div>
<div class="t" style="left:928px;top:656px;width:40px;height:25px;line-height:25px;color:#d41818">赢</div>
<div class="t" style="left:969px;top:656px;width:61px;height:25px;line-height:25px;color:#1e1ec4">小</div>
<div class="a" style="left:3px;top:681px;width:1028px;height:25px;background:#f0f0f0;"></div>
<div class="a" style="left:475px;top:681px;width:197px;height:25px;background:#fffaf6;"></div>
<div class="a" style="left:673px;top:681px;width:213px;height:25px;background:#f0f7fb;"></div>
<div class="a" style="left:4px;top:681px;width:80px;height:25px;background:#4466bb;"></div>
<div class="a" style="left:3px;top:706px;width:1028px;height:1px;background:#bababa;"></div>
<div class="a" style="left:3px;top:681px;width:1px;height:26px;background:#bababa;"></div>
<div class="a" style="left:84px;top:681px;width:1px;height:26px;background:#bababa;"></div>
<div class="a" style="left:166px;top:681px;width:1px;height:26px;background:#bababa;"></div>
<div class="a" style="left:263px;top:681px;width:1px;height:26px;background:#bababa;"></div>
<div class="a" style="left:360px;top:681px;width:1px;height:26px;background:#bababa;"></div>
<div class="a" style="left:400px;top:681px;width:1px;height:26px;background:#bababa;"></div>
<div class="a" style="left:474px;top:681px;width:1px;height:26px;background:#bababa;"></div>
<div class="a" style="left:521px;top:681px;width:1px;height:26px;background:#bababa;"></div>
<div class="a" style="left:623px;top:681px;width:1px;height:26px;background:#bababa;"></div>
<div class="a" style="left:672px;top:681px;width:1px;height:26px;background:#bababa;"></div>
<div class="a" style="left:733px;top:681px;width:1px;height:26px;background:#bababa;"></div>
<div class="a" style="left:809px;top:681px;width:1px;height:26px;background:#bababa;"></div>
<div class="a" style="left:886px;top:681px;width:1px;height:26px;background:#bababa;"></div>
<div class="a" style="left:927px;top:681px;width:1px;height:26px;background:#bababa;"></div>
<div class="a" style="left:968px;top:681px;width:1px;height:26px;background:#bababa;"></div>
<div class="a" style="left:1030px;top:681px;width:1px;height:26px;background:#bababa;"></div>
<div class="a" style="left:4px;top:681px;width:81px;height:25px;background:#4466bb;"></div>
<div class="a" style="left:4px;top:706px;width:80px;height:1px;background:#a2b2dd;"></div>
<div class="a" style="left:84px;top:681px;width:1px;height:25px;background:#ccd5ea;"></div>
<div class="t" style="left:4px;top:682px;width:80px;height:25px;line-height:25px;color:#fff">国际友谊</div>
<div class="t" style="left:85px;top:682px;width:81px;height:25px;line-height:25px;">24-09-08</div>
<div class="t" style="left:167px;top:682px;width:96px;height:25px;line-height:25px;"><span style="color:#333">马来西亚</span></div>
<div class="t" style="left:264px;top:682px;width:96px;height:25px;line-height:25px;"><span style="color:#c8182a">1-0</span>(1-0)</div>
<div class="t" style="left:361px;top:682px;width:39px;height:25px;line-height:25px;">5-2</div>
<div class="t" style="left:401px;top:682px;width:73px;height:25px;line-height:25px;"><span style="color:#167016">黎巴嫩</span><span class="rc">1</span></div>
<div class="t" style="left:475px;top:682px;width:46px;height:25px;line-height:25px;">0.92</div>
<div class="t" style="left:522px;top:682px;width:101px;height:25px;line-height:25px;">半球</div>
<div class="t" style="left:624px;top:682px;width:48px;height:25px;line-height:25px;">0.90</div>
<div class="t" style="left:673px;top:682px;width:60px;height:25px;line-height:25px;">1.83</div>
<div class="t" style="left:734px;top:682px;width:75px;height:25px;line-height:25px;">3.42</div>
<div class="t" style="left:810px;top:682px;width:76px;height:25px;line-height:25px;">4.12</div>
<div class="t" style="left:887px;top:682px;width:40px;height:25px;line-height:25px;color:#1e1ec4">负</div>
<div class="t" style="left:928px;top:682px;width:40px;height:25px;line-height:25px;color:#1e1ec4">输</div>
<div class="t" style="left:969px;top:682px;width:61px;height:25px;line-height:25px;color:#1e1ec4">小</div>
<div class="a" style="left:3px;top:707px;width:1028px;height:25px;background:#fff;"></div>
<div class="a" style="left:3px;top:707px;width:1px;height:26px;background:#bababa;"></div>
<div class="a" style="left:1030px;top:707px;width:1px;height:26px;background:#bababa;"></div>
<div class="a" style="left:3px;top:732px;width:1028px;height:1px;background:#bababa;"></div>
<div class="t" style="left:4px;top:708px;width:1026px;height:25px;line-height:25px;letter-spacing:0.22px">近<span style="color:#c8182a">10</span>场,胜6平2负2, 胜率:<span style="color:#c8182a">60%</span> 让胜率:<span style="color:#c8182a">50%</span> 大率:<span style="color:#c8182a">25%</span> 单率:<span style="color:#c8182a">60%</span></div></body></html>
